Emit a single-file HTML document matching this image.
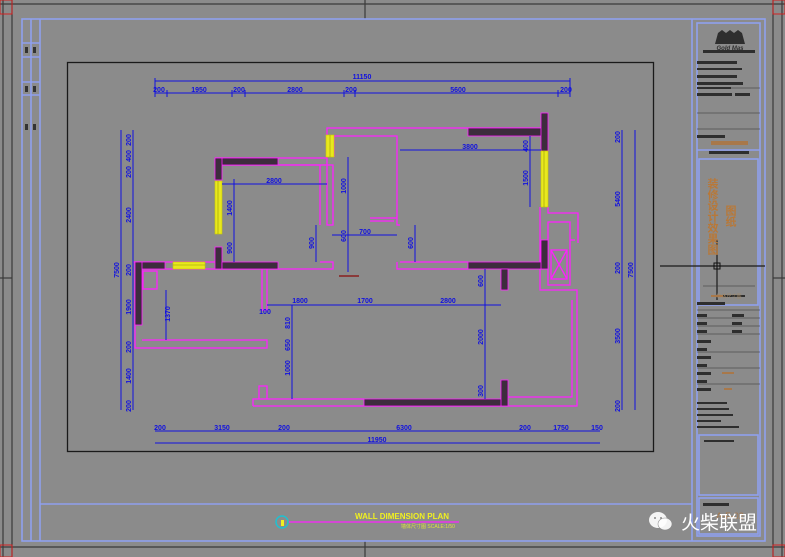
<!DOCTYPE html>
<html><head><meta charset="utf-8"><style>
html,body{margin:0;padding:0;background:#8b8b8b;overflow:hidden}
svg{display:block}
text{font-family:"Liberation Sans","Noto Sans CJK SC",sans-serif}
</style></head><body>
<svg width="785" height="557" viewBox="0 0 785 557" xmlns="http://www.w3.org/2000/svg">
<rect width="785" height="557" fill="#8b8b8b"/>
<g stroke="#3a3a3a" stroke-width="1.2" fill="none">
<line x1="3" y1="0" x2="3" y2="557"/><line x1="12" y1="0" x2="12" y2="557"/>
<line x1="0" y1="4" x2="785" y2="4"/><line x1="0" y1="547" x2="785" y2="547"/>
<line x1="773" y1="0" x2="773" y2="557"/><line x1="782" y1="0" x2="782" y2="557"/>
<line x1="0" y1="278" x2="12" y2="278"/><line x1="773" y1="278" x2="785" y2="278"/>
<line x1="365" y1="0" x2="365" y2="19"/><line x1="365" y1="541" x2="365" y2="557"/>
</g>
<rect x="0" y="0" width="12" height="14" fill="none" stroke="#d02020" stroke-width="1"/>
<rect x="773" y="0" width="12" height="14" fill="none" stroke="#d02020" stroke-width="1"/>
<rect x="0" y="545" width="12" height="12" fill="none" stroke="#d02020" stroke-width="1"/>
<rect x="773" y="545" width="12" height="12" fill="none" stroke="#d02020" stroke-width="1"/>
<g stroke="#8fa0ee" stroke-width="1.6" fill="none">
<rect x="22" y="19" width="743" height="522"/>
<line x1="31" y1="19" x2="31" y2="541"/><line x1="40" y1="19" x2="40" y2="541"/>
<line x1="40" y1="504" x2="692" y2="504"/>
<line x1="692" y1="19" x2="692" y2="541"/>
<rect x="697" y="23" width="63" height="513"/>
<line x1="697" y1="150" x2="760" y2="150"/>
<rect x="699" y="159" width="59" height="146"/>
<rect x="699" y="435" width="59" height="60"/>
<rect x="699" y="498" width="59" height="36"/>
<line x1="22" y1="43" x2="40" y2="43"/><line x1="22" y1="57" x2="40" y2="57"/>
<line x1="22" y1="82" x2="40" y2="82"/><line x1="22" y1="95" x2="40" y2="95"/>
</g>
<g fill="#333"><rect x="25" y="47" width="3" height="6"/><rect x="33" y="47" width="3" height="6"/><rect x="25" y="86" width="3" height="6"/><rect x="33" y="86" width="3" height="6"/><rect x="25" y="124" width="3" height="6"/><rect x="33" y="124" width="3" height="6"/></g>
<rect x="67.5" y="62.5" width="586" height="389" fill="none" stroke="#1a1a1a" stroke-width="1.3"/>
<g stroke="#1a1a1a" stroke-width="1.2"><line x1="660" y1="266" x2="765" y2="266"/><line x1="717" y1="240" x2="717" y2="300"/></g>
<rect x="714" y="263" width="6" height="6" fill="none" stroke="#111"/>
<g stroke="#ff20ff" stroke-width="1.3" fill="none">
<polyline points="327,135 327,128 548,128"/>
<polyline points="334,157 334,136 397,136 397,225 400,225"/>
<polyline points="370,218 397,218"/><polyline points="370,221 394,221"/>
<polyline points="215,158 327,158 327,225 333,225 333,165 222,165"/>
<polyline points="278,165 320,165 320,225"/>
<polyline points="133,262 215,262"/><polyline points="142,269 215,269 333,269 333,262 320,262"/>
<polyline points="397,262 397,269 468,269"/><polyline points="400,262 468,262"/>
<polyline points="548,207 548,213 578,213 578,243"/>
<polyline points="540,207 540,290 577,290 577,400"/>
<rect x="548" y="222" width="22" height="63"/>
<polyline points="570,240 575,240"/>
<rect x="551" y="250" width="16" height="29"/>
<line x1="551" y1="250" x2="567" y2="279"/><line x1="567" y1="250" x2="551" y2="279"/>
<polyline points="572,300 572,397 508,397"/>
<polyline points="262,269 262,310 267,310 267,269"/>
<polyline points="135,262 135,348 267,348 267,340 142,340"/>
<rect x="143" y="271" width="14" height="18"/>
<polyline points="253,406 577,406 577,400"/>
<polyline points="253,406 253,399 364,399"/>
<polyline points="259,399 259,386 267,386 267,399"/>
</g>
<g fill="#3d2c3d" stroke="#ff20ff" stroke-width="0.8">
<rect x="468" y="128" width="80" height="8"/><rect x="541" y="113" width="7" height="38"/>
<rect x="215" y="158" width="63" height="7"/><rect x="215" y="158" width="7" height="22"/>
<rect x="215" y="247" width="7" height="22"/><rect x="222" y="262" width="56" height="7"/>
<rect x="135" y="262" width="30" height="7"/><rect x="135" y="262" width="7" height="63"/>
<rect x="468" y="262" width="80" height="7"/><rect x="541" y="240" width="7" height="29"/>
<rect x="501" y="269" width="7" height="21"/>
<rect x="364" y="399" width="144" height="7"/><rect x="501" y="380" width="7" height="26"/>
</g>
<g fill="#e8e81e" stroke="#c8c800" stroke-width="0.6">
<rect x="541" y="151" width="7" height="56"/><rect x="326" y="135" width="8" height="22"/>
<rect x="215" y="181" width="7" height="53"/><rect x="173" y="262" width="32" height="7"/>
</g>
<g stroke="#999900" stroke-width="0.6"><line x1="544" y1="151" x2="544" y2="207"/><line x1="330" y1="135" x2="330" y2="157"/><line x1="218" y1="181" x2="218" y2="234"/><line x1="173" y1="265" x2="205" y2="265"/></g>
<rect x="339" y="275" width="20" height="2" fill="#8a3a3a"/>
<g stroke="#1010e0" stroke-width="1" fill="none">
<line x1="155" y1="81" x2="570" y2="81"/><line x1="155" y1="93" x2="570" y2="93"/>
<line x1="155" y1="78" x2="155" y2="97"/><line x1="167" y1="90" x2="167" y2="97"/><line x1="232" y1="90" x2="232" y2="97"/><line x1="245" y1="90" x2="245" y2="97"/><line x1="344" y1="90" x2="344" y2="97"/><line x1="355" y1="90" x2="355" y2="97"/><line x1="558" y1="90" x2="558" y2="97"/><line x1="570" y1="78" x2="570" y2="97"/>
<line x1="121" y1="130" x2="121" y2="410"/><line x1="133" y1="130" x2="133" y2="410"/>
<line x1="622" y1="130" x2="622" y2="410"/><line x1="635" y1="130" x2="635" y2="410"/>
<line x1="155" y1="431" x2="600" y2="431"/><line x1="155" y1="443" x2="600" y2="443"/>
<line x1="222" y1="184" x2="327" y2="184"/><line x1="234" y1="179" x2="234" y2="262"/>
<line x1="400" y1="150" x2="541" y2="150"/><line x1="530" y1="136" x2="530" y2="207"/>
<line x1="348" y1="157" x2="348" y2="272"/><line x1="332" y1="235" x2="397" y2="235"/>
<line x1="316" y1="225" x2="316" y2="262"/><line x1="415" y1="225" x2="415" y2="262"/>
<line x1="166" y1="290" x2="166" y2="340"/>
<line x1="267" y1="305" x2="501" y2="305"/><line x1="292" y1="305" x2="292" y2="399"/>
<line x1="485" y1="269" x2="485" y2="399"/>
</g>
<g fill="#1010e0" font-size="7" font-weight="bold" text-anchor="middle">
<text x="362" y="79">11150</text>
<text x="159" y="92">200</text><text x="199" y="92">1950</text><text x="239" y="92">200</text><text x="295" y="92">2800</text><text x="351" y="92">200</text><text x="458" y="92">5600</text><text x="566" y="92">200</text>
<text x="160" y="430">200</text><text x="222" y="430">3150</text><text x="284" y="430">200</text><text x="404" y="430">6300</text><text x="525" y="430">200</text><text x="561" y="430">1750</text><text x="597" y="430">150</text>
<text x="377" y="442">11950</text>
<text x="274" y="183">2800</text><text x="470" y="149">3800</text><text x="300" y="303">1800</text><text x="365" y="303">1700</text><text x="448" y="303">2800</text><text x="365" y="234">700</text><text x="265" y="314">100</text>
</g>
<g fill="#1010e0" font-size="7" font-weight="bold" text-anchor="middle">
<text transform="translate(119,270) rotate(-90)">7500</text>
<text transform="translate(131,140) rotate(-90)">200</text><text transform="translate(131,156) rotate(-90)">400</text><text transform="translate(131,172) rotate(-90)">200</text>
<text transform="translate(131,215) rotate(-90)">2400</text><text transform="translate(131,270) rotate(-90)">200</text>
<text transform="translate(131,307) rotate(-90)">1900</text><text transform="translate(131,347) rotate(-90)">200</text><text transform="translate(131,376) rotate(-90)">1400</text><text transform="translate(131,406) rotate(-90)">200</text>
<text transform="translate(620,137) rotate(-90)">200</text><text transform="translate(620,199) rotate(-90)">5400</text><text transform="translate(620,268) rotate(-90)">200</text><text transform="translate(620,336) rotate(-90)">3500</text><text transform="translate(620,406) rotate(-90)">200</text>
<text transform="translate(633,270) rotate(-90)">7500</text>
<text transform="translate(232,208) rotate(-90)">1400</text><text transform="translate(232,248) rotate(-90)">900</text>
<text transform="translate(346,186) rotate(-90)">1000</text><text transform="translate(346,236) rotate(-90)">600</text>
<text transform="translate(528,146) rotate(-90)">400</text><text transform="translate(528,178) rotate(-90)">1500</text>
<text transform="translate(314,243) rotate(-90)">900</text><text transform="translate(413,243) rotate(-90)">600</text>
<text transform="translate(170,314) rotate(-90)">1370</text>
<text transform="translate(290,323) rotate(-90)">810</text><text transform="translate(290,345) rotate(-90)">650</text><text transform="translate(290,368) rotate(-90)">1000</text>
<text transform="translate(483,281) rotate(-90)">600</text><text transform="translate(483,337) rotate(-90)">2000</text><text transform="translate(483,391) rotate(-90)">300</text>
</g>
<circle cx="282" cy="522" r="6" fill="none" stroke="#20c0d0" stroke-width="1.5"/>
<rect x="281" y="520" width="3" height="6" fill="#f0f020"/>
<line x1="289" y1="522" x2="459" y2="522" stroke="#ff20ff" stroke-width="1.2"/>
<text x="402" y="519" fill="#f0f020" font-size="8" font-weight="bold" text-anchor="middle">WALL DIMENSION PLAN</text>
<text x="428" y="528" fill="#e0e040" font-size="5" text-anchor="middle">墙体尺寸图 SCALE:1/50</text>
<g fill="#2e2e2e">
<path d="M715 44 L718 33 L722 30 L726 33 L730 30 L734 33 L738 30 L742 33 L745 44 Z"/>
<rect x="703" y="50" width="52" height="3"/>
<rect x="697" y="61" width="40" height="3"/><rect x="697" y="68" width="45" height="2"/><rect x="697" y="75" width="40" height="3"/><rect x="697" y="82" width="46" height="3"/><rect x="697" y="87" width="34" height="2"/>
<rect x="697" y="93" width="35" height="3"/><rect x="735" y="93" width="15" height="3"/>
<rect x="697" y="135" width="28" height="3"/>
<rect x="709" y="151" width="40" height="3"/>
<rect x="712" y="295" width="33" height="2"/>
<rect x="697" y="302" width="28" height="3"/>
<rect x="697" y="314" width="10" height="3"/><rect x="732" y="314" width="12" height="3"/>
<rect x="697" y="322" width="10" height="3"/><rect x="732" y="322" width="10" height="3"/>
<rect x="697" y="330" width="10" height="3"/><rect x="732" y="330" width="10" height="3"/>
<rect x="697" y="340" width="14" height="3"/><rect x="697" y="348" width="10" height="3"/><rect x="697" y="356" width="14" height="3"/><rect x="697" y="364" width="10" height="3"/><rect x="697" y="372" width="14" height="3"/><rect x="697" y="380" width="10" height="3"/><rect x="697" y="388" width="14" height="3"/>
<rect x="697" y="402" width="30" height="2"/><rect x="697" y="408" width="32" height="2"/><rect x="697" y="414" width="36" height="2"/><rect x="697" y="420" width="24" height="2"/><rect x="697" y="426" width="42" height="2"/>
<rect x="704" y="440" width="30" height="2"/><rect x="703" y="503" width="26" height="3"/>
</g>
<g stroke="#2e2e2e" stroke-width="0.6"><line x1="697" y1="88" x2="760" y2="88"/><line x1="697" y1="113" x2="760" y2="113"/><line x1="697" y1="129" x2="760" y2="129"/><line x1="697" y1="310" x2="760" y2="310"/><line x1="697" y1="318" x2="760" y2="318"/><line x1="697" y1="326" x2="760" y2="326"/><line x1="697" y1="334" x2="760" y2="334"/><line x1="697" y1="352" x2="760" y2="352"/><line x1="697" y1="368" x2="760" y2="368"/><line x1="697" y1="384" x2="760" y2="384"/><line x1="703" y1="286" x2="755" y2="286"/></g>
<text x="730" y="50" font-size="6" font-weight="bold" font-style="italic" fill="#2e2e2e" text-anchor="middle">Gold Mas</text>
<rect x="711" y="141" width="37" height="4" fill="#a8784a"/>
<text x="712" y="178" fill="#b87838" font-size="11" font-weight="bold" writing-mode="tb">装修设计效果图</text>
<text x="730" y="205" fill="#b87838" font-size="11" font-weight="bold" writing-mode="tb">图纸</text>
<text x="729" y="298" fill="#a08868" font-size="5" text-anchor="middle">墙体尺寸图</text>
<rect x="711" y="295" width="12" height="2" fill="#a8784a"/>
<rect x="724" y="388" width="8" height="2" fill="#a8784a"/><rect x="722" y="372" width="12" height="2" fill="#a8784a"/>
<text x="730" y="519" fill="#a8784a" font-size="9" text-anchor="middle">A-F-02</text>
<g transform="translate(658,520)"><ellipse cx="0" cy="0" rx="9" ry="8" fill="#fff" opacity="0.9"/><ellipse cx="7" cy="4" rx="7" ry="6" fill="#fff" opacity="0.9" stroke="#888" stroke-width="0.6"/><circle cx="-3" cy="-2" r="1" fill="#888"/><circle cx="3" cy="-2" r="1" fill="#888"/></g>
<text x="719" y="529" fill="#ffffff" font-size="19" text-anchor="middle" font-family="'Noto Sans CJK SC',sans-serif">火柴联盟</text>
</svg>
</body></html>
